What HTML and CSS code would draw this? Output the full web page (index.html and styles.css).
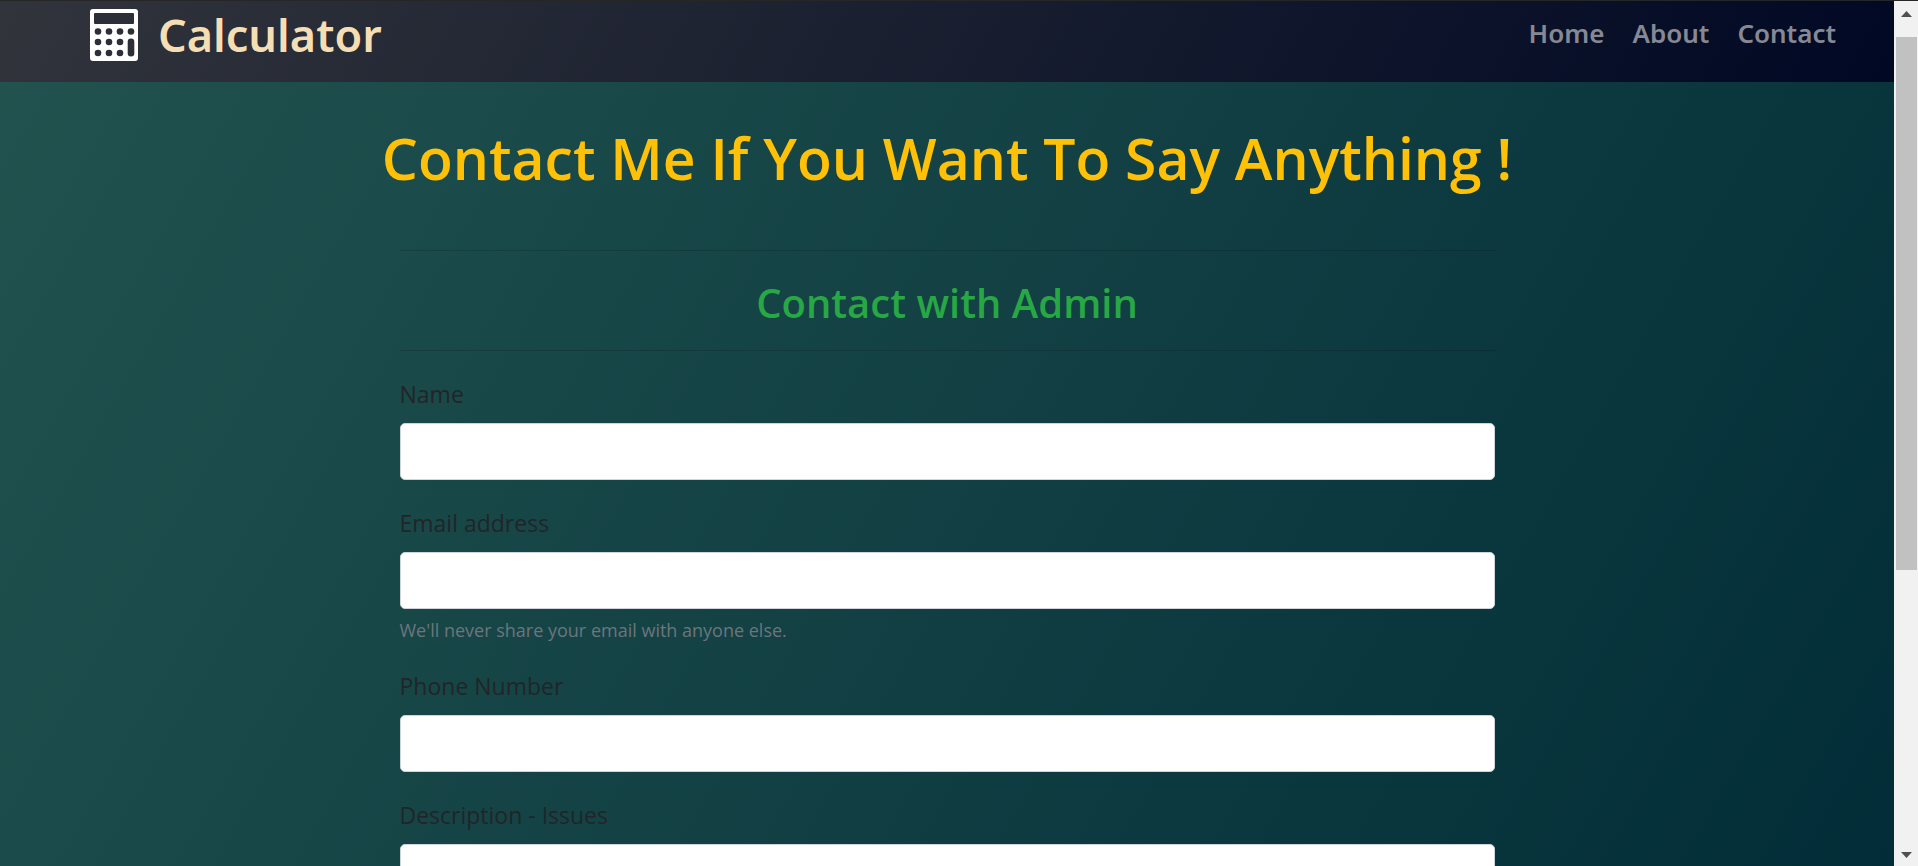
FILE: index.html
```html
<!DOCTYPE html>
<html lang="en">
<head>
<meta charset="utf-8">
<title>Calculator - Contact</title>
<link rel="stylesheet" href="styles.css">
</head>
<body>
<div class="page">
  <header class="navbar">
    <a class="brand" href="#">
      <svg class="brand-icon" viewBox="0 0 48 52" aria-hidden="true">
        <rect width="48" height="52" rx="3" fill="#fff"/>
        <g fill="#2c2f38">
          <rect x="4" y="4" width="40" height="11" rx="1"/>
          <circle cx="8" cy="22.500" r="3.300"/><circle cx="19" cy="22.500" r="3.300"/><circle cx="30" cy="22.500" r="3.300"/><circle cx="41" cy="22.500" r="3.300"/>
          <circle cx="8" cy="33" r="3.300"/><circle cx="19" cy="33" r="3.300"/><circle cx="30" cy="33" r="3.300"/>
          <circle cx="8" cy="44" r="3.300"/><circle cx="19" cy="44" r="3.300"/><circle cx="30" cy="44" r="3.300"/>
          <rect x="37.700" y="29.500" width="6.600" height="18" rx="3.300"/>
        </g>
      </svg>
      <span>Calculator</span>
    </a>
    <nav class="links">
      <a href="#">Home</a>
      <a href="#">About</a>
      <a href="#">Contact</a>
    </nav>
  </header>
  <main class="content">
    <h1 class="title">Contact Me If You Want To Say Anything !</h1>
    <form class="form">
      <h2 class="subtitle">Contact with Admin</h2>
      <div class="group">
        <label for="name">Name</label>
        <input id="name" type="text">
      </div>
      <div class="group">
        <label for="email">Email address</label>
        <input id="email" type="email">
        <small>We'll never share your email with anyone else.</small>
      </div>
      <div class="group">
        <label for="phone">Phone Number</label>
        <input id="phone" type="tel">
      </div>
      <div class="group">
        <label for="issues">Description - Issues</label>
        <textarea id="issues" rows="3"></textarea>
      </div>
    </form>
  </main>
</div>
<div class="scrollbar" aria-hidden="true">
  <svg class="arrow" viewBox="0 0 11 6"><path d="M5.500 0 11 6H0z" fill="#505050"/></svg>
  <div class="track"><div class="thumb"></div></div>
  <svg class="arrow" viewBox="0 0 11 6"><path d="M0 0h11L5.500 6z" fill="#505050"/></svg>
</div>
</body>
</html>
```
FILE: styles.css
```css
* { box-sizing: border-box; }

body {
  margin: 0;
  height: 100vh;
  display: flex;
  overflow: hidden;
  border-top: 1px solid #262626;
  font-family: "Open Sans", "Noto Sans", sans-serif;
  color: #212529;
}

.page {
  flex: 1;
  min-width: 0;
  overflow: hidden;
  background: linear-gradient(120deg, #22534f, #022d38);
}

.navbar {
  display: flex;
  justify-content: space-between;
  align-items: flex-start;
  height: 81px;
  padding: 0 58px 0 90px;
  background: linear-gradient(120deg, #31343b, #000824);
  font-family: "Noto Sans", sans-serif;
  font-weight: 600;
}

.brand {
  display: flex;
  align-items: center;
  gap: 20px;
  color: #f5deb3;
  font-size: 45px;
  line-height: 68px;
  text-decoration: none;
}

.brand-icon { width: 48px; height: 52px; }

.links { display: flex; gap: 28px; }

.links a {
  color: #868994;
  font-size: 26px;
  line-height: 64px;
  text-decoration: none;
}

.content { padding-top: 40px; }

.title {
  margin: 0 0 56px;
  color: #ffc107;
  font-size: 57px;
  font-weight: 600;
  line-height: 72px;
  text-align: center;
}

.form { max-width: 1095px; margin: 0 auto; }

.subtitle {
  margin: 0 0 25px;
  padding: 27px 0 23px;
  border-top: 1px solid rgba(0, 0, 0, 0.15);
  border-bottom: 1px solid rgba(0, 0, 0, 0.15);
  color: #28a745;
  font-size: 40px;
  font-weight: 600;
  line-height: 49px;
  text-align: center;
}

.group { display: flex; flex-direction: column; margin-bottom: 25px; }

.group label {
  margin-bottom: 10px;
  font-size: 23px;
  line-height: 37px;
}

.group input,
.group textarea {
  width: 100%;
  height: 57px;
  padding: 8px 15px;
  border: 1px solid #ced4da;
  border-radius: 5px;
  background: #fff;
  font: inherit;
  font-size: 24px;
}

.group textarea { height: 130px; resize: none; }

.group small {
  margin-top: 8px;
  color: #6c757d;
  font-size: 18px;
  line-height: 26px;
}

.scrollbar {
  display: flex;
  flex-direction: column;
  align-items: center;
  width: 24px;
  padding: 10px 1px 8px 2px;
  background: #f1f1f1;
}

.arrow { width: 11px; height: 6px; }

.track { flex: 1; width: 100%; padding: 20px 0; }

.thumb { height: 67%; background: #c1c1c1; }
```
